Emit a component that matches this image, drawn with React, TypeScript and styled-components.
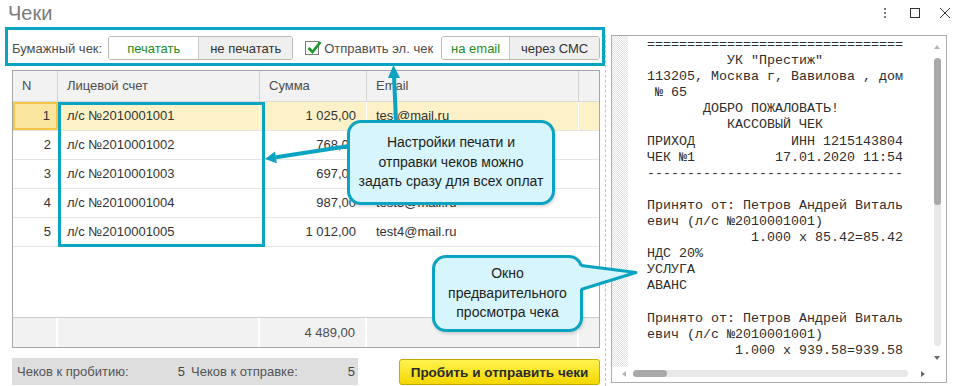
import styled, { createGlobalStyle } from 'styled-components'

//#region STYLE
const CYAN = '#0aa3c2'
const CALLOUT_BG = '#d7f5fc'

const GlobalStyle = createGlobalStyle`
	*, *::before, *::after { box-sizing: border-box; }
	html, body { margin: 0; padding: 0; background: #fff; }
	body {
		font-family: 'Liberation Sans', Arial, sans-serif;
		font-size: 13px;
		color: #333;
	}
`

const Window = styled.div`
	position: relative;
	width: 957px;
	height: 386px;
	overflow: hidden;
	background: #fff;
`

const TitleBar = styled.div`
	height: 35px;
	display: flex;
	justify-content: space-between;
	align-items: flex-start;
	padding: 0 4px 0 8px;
`

const Title = styled.div`
	font-size: 20px;
	line-height: 26px;
	color: #7b7b7b;
`

const Controls = styled.div`
	display: flex;
	gap: 14px;
	padding-top: 5px;
	svg { display: block; }
`

const Body = styled.div`
	display: flex;
	height: 351px;
`

const LeftCol = styled.div`
	width: 600px;
	flex-shrink: 0;
	padding: 1px 0 0 12px;
	display: flex;
	flex-direction: column;
`

const Splitter = styled.div`
	border-left: 1px dashed #c4c4c4;
	margin: 0 5px;
`

const Toolbar = styled.div`
	height: 24px;
	display: flex;
	align-items: center;
	color: #4d4d4d;
	white-space: nowrap;
	& > * { flex-shrink: 0; }
	.label { margin-right: 6px; }
`

const Segmented = styled.div<{ $ml?: number }>`
	display: flex;
	height: 24px;
	margin-left: ${p => p.$ml || 0}px;
	border: 1px solid #b9b9b9;
	border-radius: 3px;
	overflow: hidden;
`

const SegButton = styled.div<{ $active?: boolean; $w: number }>`
	width: ${p => p.$w}px;
	display: flex;
	align-items: center;
	justify-content: center;
	background: ${p => (p.$active ? '#fff' : '#efefef')};
	color: ${p => (p.$active ? '#1e8c1e' : '#333')};
	& + & { border-left: 1px solid #c8c8c8; }
`

const CheckLabel = styled.label`
	display: flex;
	align-items: center;
	gap: 5px;
	margin-left: 12px;
	color: #4d4d4d;
`

const CheckBox = styled.span`
	width: 14px;
	height: 14px;
	border: 1px solid #7d7d7d;
	background: #fff;
	position: relative;
	svg { position: absolute; left: 0; top: -3px; }
`

const Table = styled.div`
	margin-top: 10px;
	height: 278px;
	border: 1px solid #a6a6a6;
	display: flex;
	flex-direction: column;
`

const COLS = '45px 202px 107px 212px 1fr'

const HeaderRow = styled.div`
	display: grid;
	grid-template-columns: ${COLS};
	height: 31px;
	background: #f2f2f2;
	border-bottom: 1px solid #dcdcdc;
`

const HeaderCell = styled.div`
	padding-left: 9px;
	line-height: 30px;
	color: #4d4d4d;
	border-right: 1px solid #d2d2d2;
	&:last-child { border-right: 0; }
`

const Row = styled.div<{ $selected?: boolean }>`
	display: grid;
	grid-template-columns: ${COLS};
	height: 29px;
	background: ${p => (p.$selected ? '#fdf2c7' : '#fff')};
	border-bottom: 1px solid #e6e6e6;
`

const Cell = styled.div<{ $right?: boolean; $current?: boolean; $selected?: boolean }>`
	line-height: 28px;
	white-space: nowrap;
	color: #333;
	text-align: ${p => (p.$right ? 'right' : 'left')};
	padding: ${p => (p.$right ? '0 10px 0 0' : '0 0 0 9px')};
	border-right: 1px solid ${p => (p.$selected ? '#fff' : 'transparent')};
	&:last-child { border-right: 0; }
	${p => p.$current && `
		background: #fbe6a0;
		border: 2px solid #f5c545;
		line-height: 24px;
		padding-right: 4px;
	`}
`

const NumCell = styled(Cell)`
	padding-right: 6px;
`

const Filler = styled.div`
	flex: 1;
`

const FooterRow = styled.div`
	display: grid;
	grid-template-columns: ${COLS};
	height: 30px;
	background: #f2f2f2;
	border-top: 1px solid #cdcdcd;
	div {
		border-right: 2px solid #fff;
		line-height: 29px;
		color: #4d4d4d;
	}
	div:last-child { border-right: 0; }
	.sum { text-align: right; padding-right: 10px; }
`

const BottomRow = styled.div`
	margin-top: 10px;
	height: 27px;
	display: flex;
	justify-content: space-between;
`

const StatusBar = styled.div`
	width: 346px;
	background: #dedede;
	display: flex;
	gap: 6px;
	padding: 0 3px 0 5px;
	align-items: center;
	color: #555;
`

const StatusItem = styled.div<{ $w: number }>`
	width: ${p => p.$w}px;
	display: flex;
	justify-content: space-between;
	span + span { color: #444; }
`

const PrimaryButton = styled.div`
	width: 201px;
	margin-top: 1px;
	display: flex;
	align-items: center;
	justify-content: center;
	border: 1px solid #c7ab00;
	border-radius: 3px;
	background: linear-gradient(#fff350, #f4d600);
	font-weight: bold;
	font-size: 13.5px;
	color: #2b2b2b;
`

const Receipt = styled.div`
	width: 336px;
	height: 348px;
	border: 1px solid #acacac;
	display: grid;
	grid-template-columns: 16px 1fr 17px;
	grid-template-rows: 1fr 15px;
`

const Hatch = styled.div`
	background: repeating-conic-gradient(#e2e2e2 0 25%, #fff 0 50%) 0 0 / 2px 2px;
`

const ReceiptText = styled.pre`
	margin: 0;
	padding: 1px 0 0 19px;
	font-family: 'Liberation Mono', 'Courier New', monospace;
	font-size: 13.33px;
	line-height: 16.1px;
	color: #2e2e2e;
	overflow: hidden;
`

const VScroll = styled.div`
	grid-row: 1 / 3;
	grid-column: 3;
	display: flex;
	flex-direction: column;
	align-items: center;
	padding: 9px 1px 0 0;
`

const Arrow = styled.span<{ $dir: 'up' | 'down' | 'left' | 'right' }>`
	width: 0;
	height: 0;
	border: 3.5px solid transparent;
	${p => p.$dir === 'up' && 'border-bottom: 4px solid #b4b4b4; border-top: 0;'}
	${p => p.$dir === 'down' && 'border-top: 4px solid #6a6a6a; border-bottom: 0;'}
	${p => p.$dir === 'left' && 'border-right: 4px solid #b4b4b4; border-left: 0;'}
	${p => p.$dir === 'right' && 'border-left: 4px solid #6a6a6a; border-right: 0;'}
`

const VTrack = styled.div`
	margin-top: 9px;
	width: 7px;
	height: 288px;
	border-radius: 4px;
	background: #e8e8e8;
	div { height: 147px; border-radius: 4px; background: #a9a9a9; }
`

const HScroll = styled.div`
	grid-column: 1 / 3;
	display: flex;
	align-items: center;
	padding: 0 0 2px 10px;
	gap: 7px;
`

const HTrack = styled.div`
	width: 275px;
	height: 7px;
	border-radius: 4px;
	background: #e8e8e8;
	margin-right: 6px;
	div { width: 34px; height: 7px; border-radius: 4px; background: #a9a9a9; }
`

const Highlight = styled.div<{ $x: number; $y: number; $w: number; $h: number }>`
	position: absolute;
	left: ${p => p.$x}px;
	top: ${p => p.$y}px;
	width: ${p => p.$w}px;
	height: ${p => p.$h}px;
	border: 3px solid ${CYAN};
	pointer-events: none;
`

const Callout = styled.div<{ $x: number; $y: number; $w: number; $h: number }>`
	position: absolute;
	left: ${p => p.$x}px;
	top: ${p => p.$y}px;
	width: ${p => p.$w}px;
	height: ${p => p.$h}px;
	border: 3px solid ${CYAN};
	border-radius: 14px;
	background: ${CALLOUT_BG};
	display: flex;
	align-items: center;
	justify-content: center;
	text-align: center;
	font-size: 14px;
	line-height: 19.5px;
	color: #1e1e1e;
	box-shadow: 1px 2px 3px rgba(0, 0, 0, 0.15);
`

const Overlay = styled.svg`
	position: absolute;
	left: 0;
	top: 0;
	pointer-events: none;
`
//#endregion

const rows = [
	{ n: 1, acc: 'л/с №2010001001', sum: '1 025,00', email: 'test@mail.ru' },
	{ n: 2, acc: 'л/с №2010001002', sum: '768,00', email: 'test1@mail.ru' },
	{ n: 3, acc: 'л/с №2010001003', sum: '697,00', email: 'test2@mail.ru' },
	{ n: 4, acc: 'л/с №2010001004', sum: '987,00', email: 'test3@mail.ru' },
	{ n: 5, acc: 'л/с №2010001005', sum: '1 012,00', email: 'test4@mail.ru' },
]

const receipt = [
	'================================',
	'          УК "Престиж"',
	'113205, Москва г, Вавилова , дом',
	' № 65',
	'       ДОБРО ПОЖАЛОВАТЬ!',
	'          КАССОВЫЙ ЧЕК',
	'ПРИХОД            ИНН 1215143804',
	'ЧЕК №1          17.01.2020 11:54',
	'--------------------------------',
	'',
	'Принято от: Петров Андрей Виталь',
	'евич (л/с №2010001001)',
	'             1.000 x 85.42=85.42',
	'НДС 20%',
	'УСЛУГА',
	'АВАНС',
	'',
	'Принято от: Петров Андрей Виталь',
	'евич (л/с №2010001001)',
	'           1.000 x 939.58=939.58',
].join('\n')

const App = () => {

	//#region RENDER
	return (
		<Window>
			<GlobalStyle />
			<TitleBar>
				<Title>Чеки</Title>
				<Controls>
					<svg width='16' height='16' viewBox='0 0 16 16'>
						<rect x='7' y='3' width='2' height='2' fill='#7a7a7a' />
						<rect x='7' y='7' width='2' height='2' fill='#7a7a7a' />
						<rect x='7' y='11' width='2' height='2' fill='#7a7a7a' />
					</svg>
					<svg width='16' height='16' viewBox='0 0 16 16'>
						<rect x='3.5' y='3.5' width='9' height='9' fill='none' stroke='#333' strokeWidth='1' />
					</svg>
					<svg width='16' height='16' viewBox='0 0 16 16'>
						<path d='M3 3 L13 13 M13 3 L3 13' stroke='#333' strokeWidth='1' />
					</svg>
				</Controls>
			</TitleBar>

			<Body>
				<LeftCol>
					<Toolbar>
						<span className='label'>Бумажный чек:</span>
						<Segmented>
							<SegButton $w={89} $active>печатать</SegButton>
							<SegButton $w={94}>не печатать</SegButton>
						</Segmented>
						<CheckLabel>
							<CheckBox>
								<svg width='17' height='17' viewBox='0 0 17 17'>
									<path d='M2.5 9 L6.5 13 L14.5 3' fill='none' stroke='#1a9a2a' strokeWidth='2.8' />
								</svg>
							</CheckBox>
							Отправить эл. чек
						</CheckLabel>
						<Segmented $ml={8}>
							<SegButton $w={67} $active>на email</SegButton>
							<SegButton $w={90}>через СМС</SegButton>
						</Segmented>
					</Toolbar>

					<Table>
						<HeaderRow>
							<HeaderCell>N</HeaderCell>
							<HeaderCell>Лицевой счет</HeaderCell>
							<HeaderCell>Сумма</HeaderCell>
							<HeaderCell>Email</HeaderCell>
							<HeaderCell />
						</HeaderRow>
						{rows.map(row => {
							const selected = row.n === 1
							return (
								<Row key={row.n} $selected={selected}>
									<NumCell $right $current={selected} $selected={selected}>{row.n}</NumCell>
									<Cell $selected={selected}>{row.acc}</Cell>
									<Cell $right $selected={selected}>{row.sum}</Cell>
									<Cell $selected={selected}>{row.email}</Cell>
									<Cell $selected={selected} />
								</Row>
							)
						})}
						<Filler />
						<FooterRow>
							<div />
							<div />
							<div className='sum'>4 489,00</div>
							<div />
							<div />
						</FooterRow>
					</Table>

					<BottomRow>
						<StatusBar>
							<StatusItem $w={168}>
								<span>Чеков к пробитию:</span>
								<span>5</span>
							</StatusItem>
							<StatusItem $w={164}>
								<span>Чеков к отправке:</span>
								<span>5</span>
							</StatusItem>
						</StatusBar>
						<PrimaryButton>Пробить и отправить чеки</PrimaryButton>
					</BottomRow>
				</LeftCol>

				<Splitter />

				<Receipt>
					<Hatch />
					<ReceiptText>{receipt}</ReceiptText>
					<VScroll>
						<Arrow $dir='up' />
						<VTrack><div /></VTrack>
						<Arrow $dir='down' style={{ marginTop: 10 }} />
					</VScroll>
					<HScroll>
						<Arrow $dir='left' />
						<HTrack><div /></HTrack>
						<Arrow $dir='right' />
					</HScroll>
				</Receipt>
			</Body>

			<Highlight $x={5} $y={27} $w={600} $h={39} />
			<Highlight $x={58} $y={102} $w={207} $h={145} />

			<Callout $x={347} $y={120} $w={208} $h={85}>
				Настройки печати и<br />отправки чеков можно<br />задать сразу для всех оплат
			</Callout>
			<Callout $x={432} $y={255} $w={151} $h={77}>
				Окно<br />предварительного<br />просмотра чека
			</Callout>

			<Overlay width='957' height='386' viewBox='0 0 957 386'>
				<line x1='396' y1='121' x2='394' y2='76' stroke={CYAN} strokeWidth='4' />
				<polygon points='393.5,65 388,78 400,78' fill={CYAN} />
				<line x1='349' y1='146' x2='276' y2='157.3' stroke={CYAN} strokeWidth='4' />
				<polygon points='265,159 276.8,163.2 275,151.4' fill={CYAN} />
				<path d='M577,266 L583,266 L636,272.5 L583,289 L577,289 Z' fill={CALLOUT_BG} />
				<path d='M581,265.5 L636,272.5 L581,289.5' fill='none' stroke={CYAN} strokeWidth='3' strokeLinejoin='round' />
			</Overlay>
		</Window>
	)
	//#endregion
}

export default App
